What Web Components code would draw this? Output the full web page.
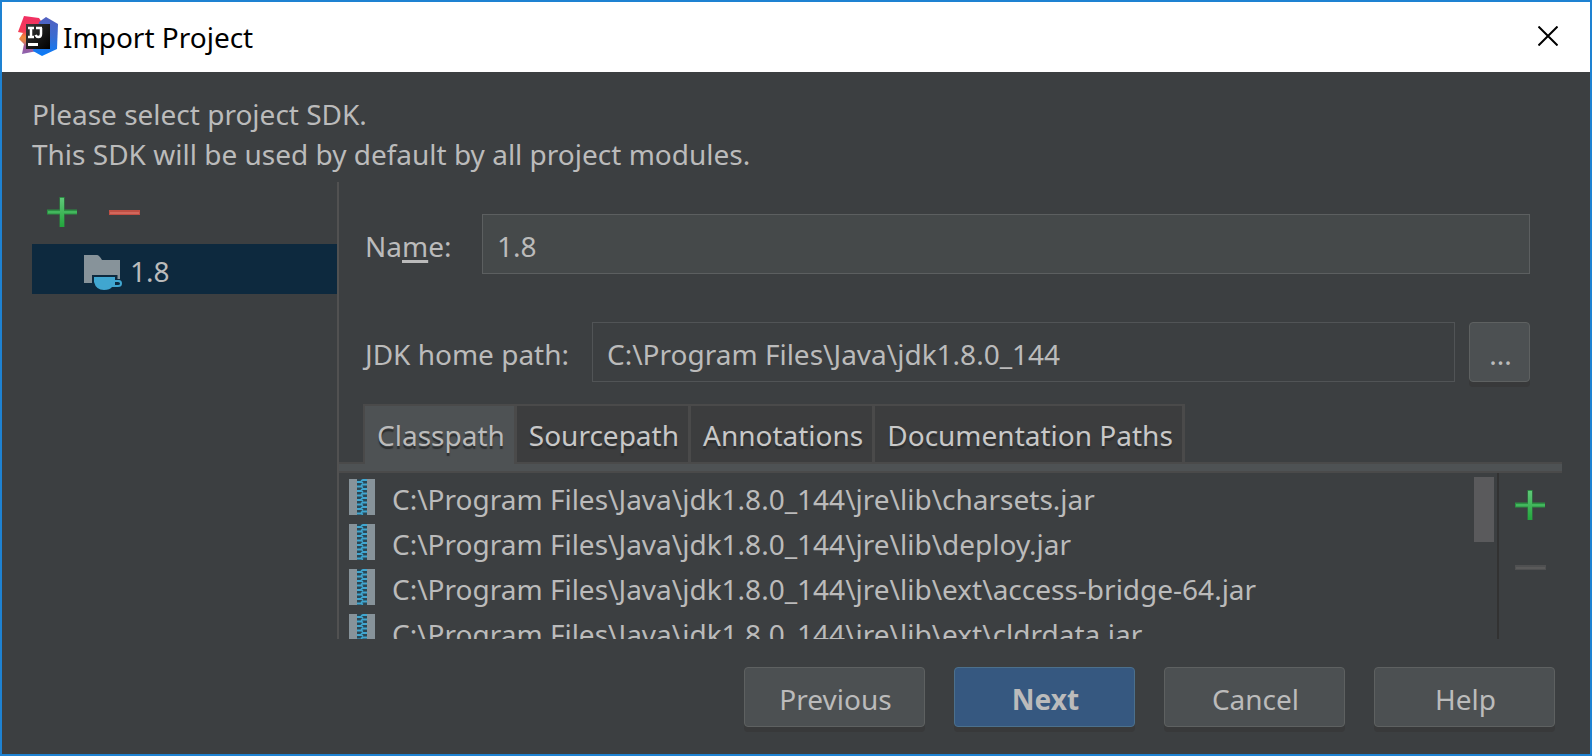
<!DOCTYPE html>
<html lang="en">
<head>
<meta charset="utf-8">
<title>Import Project</title>
<style>
  body { margin: 0; background: #3c3f41; font: 28px/40px "Noto Sans", "Open Sans", sans-serif; color: #bbbbbb; }
</style>
</head>
<body>
<import-dialog></import-dialog>

<template id="t-dialog">
  <style>
    :host { display: flex; flex-direction: column; box-sizing: border-box; height: 100vh; min-height: 640px; border: 2px solid #1e82d2; background: #3c3f41; }
    .intro { margin: 0; padding: 22px 30px 8px; }
    main { flex: 1; min-height: 0; display: flex; padding: 0 28px 0 30px; }
    sdk-sidebar { flex: 0 0 305px; }
    .detail { flex: 1; min-width: 0; display: flex; flex-direction: column; border-left: 2px solid #515151; }
    .fields { display: flex; flex-direction: column; gap: 48px; padding: 32px 32px 22px 26px; }
    path-panel { flex: 1; min-height: 0; }
    footer { display: flex; justify-content: flex-end; gap: 29px; padding: 28px 35px 27px; }
  </style>
  <title-bar>Import Project</title-bar>
  <p class="intro">Please select project SDK.<br>This SDK will be used by default by all project modules.</p>
  <main>
    <sdk-sidebar></sdk-sidebar>
    <section class="detail">
      <div class="fields">
        <form-field value="1.8" style="--label: 117px; --fill: #45494a; --line: #5c5f60">Na<u>m</u>e:</form-field>
        <form-field value="C:\Program Files\Java\jdk1.8.0_144" readonly browse style="--label: 227px">JDK home path:</form-field>
      </div>
      <path-panel></path-panel>
    </section>
  </main>
  <footer>
    <push-button>Previous</push-button>
    <push-button primary>Next</push-button>
    <push-button>Cancel</push-button>
    <push-button>Help</push-button>
  </footer>
</template>

<template id="t-title">
  <style>
    :host { display: flex; align-items: center; box-sizing: border-box; flex: 0 0 70px; height: 70px; padding: 0 32px 2px 16px; background: #fff; color: #000; }
    h1 { flex: 1; margin: 0; padding: 2px 0 0 5px; font-size: 28px; font-weight: 400; line-height: 40px; }
    button { display: flex; padding: 0; border: 0; background: none; }
    svg { display: block; }
  </style>
  <svg width="40" height="40" viewBox="0 0 40 40" aria-hidden="true">
    <defs>
      <linearGradient id="a" x1="0" y1="0" x2="0" y2="1"><stop offset="0" stop-color="#f02f63"/><stop offset=".4" stop-color="#f53b58"/><stop offset=".55" stop-color="#f0883a"/><stop offset=".66" stop-color="#e08050"/><stop offset=".8" stop-color="#a05a98"/><stop offset="1" stop-color="#8c62b0"/></linearGradient>
      <linearGradient id="b" x1="0" y1="0" x2="0" y2="1"><stop offset="0" stop-color="#5360c0"/><stop offset=".5" stop-color="#3a6cd0"/><stop offset="1" stop-color="#087cfa"/></linearGradient>
      <linearGradient id="c" x1="0" y1="0" x2="1" y2="1"><stop offset="0" stop-color="#3a3a3a"/><stop offset=".6" stop-color="#151515"/><stop offset="1" stop-color="#000"/></linearGradient>
    </defs>
    <path fill="url(#a)" d="M6 0 21 2 25 8 24 34 4 38 6 28 1 23 5 17 0 16Z"/>
    <path fill="url(#b)" d="M28 1 40 8 39 33 24 40 15 35 21 6Z"/>
    <path fill="url(#c)" d="M8 8H32V33H8Z"/>
    <path fill="none" stroke="#fff" stroke-width="2.500" d="M10 12H16M13 12V21M10 21H16M18 12H24M23 12V18Q23 21 20.500 21 18.500 21 17.500 19"/>
    <path fill="#fff" d="M10 27H20V30H10Z"/>
  </svg>
  <h1><slot></slot></h1>
  <button aria-label="Close"><svg width="20" height="20" viewBox="0 0 20 20"><path d="M.5 .5 19.500 19.500M19.500 .5 .5 19.500" stroke="#000" stroke-width="2"/></svg></button>
</template>

<template id="t-icon-button">
  <style>
    :host { display: block; }
    button { display: block; padding: 0; border: 0; background: none; }
    svg { display: block; }
  </style>
  <button><svg width="31" height="31" viewBox="0 0 31 31">
    <defs><linearGradient id="v" x1="0" y1="0" x2="0" y2="1"><stop offset="0" stop-color="#5fc878"/><stop offset="1" stop-color="#22a53c"/></linearGradient></defs>
    <g class="art"></g></svg></button>
</template>

<template id="t-sidebar">
  <style>
    :host { display: block; }
    .tools { display: flex; gap: 31px; padding: 15px 15px 16px; }
    ul { margin: 0; padding: 0; list-style: none; }
    li { display: flex; align-items: center; box-sizing: border-box; gap: 8px; height: 50px; padding: 4px 0 0 52px; background: #0d293e; }
    svg { display: block; margin-top: 4px; }
  </style>
  <div class="tools"><icon-button kind="add" label="Add SDK"></icon-button><icon-button kind="remove" label="Remove SDK"></icon-button></div>
  <ul><li>
    <svg width="38" height="36" viewBox="0 0 38 36" aria-hidden="true">
      <path fill="#87939a" d="M0 0H13Q15 0 18 5H36V24H33.500V20H8V28H0Z"/>
      <path fill="#40a6d0" d="M10 22H31V25H35Q38 25 38 28.500 38 32 34 32H28Q26 35 20 35 12 35 10 27ZM31 27V30H34Q36 30 36 28.500 36 27 34 27Z" fill-rule="evenodd"/>
    </svg>1.8</li></ul>
</template>

<template id="t-field">
  <style>
    :host { display: flex; align-items: center; }
    label { flex: 0 0 var(--label); white-space: nowrap; padding-top: 4px; }
    ::slotted(u) { text-decoration-thickness: 3px; text-underline-offset: 3px; text-decoration-skip-ink: none; }
    input { flex: 1; min-width: 0; box-sizing: border-box; height: 60px; margin: 0; padding: 4px 14px 0; border: 1px solid var(--line, #515456); background: var(--fill, #3c3f41); color: inherit; font: inherit; outline: 0; }
    push-button { margin-left: 14px; --width: 61px; }
  </style>
  <label for="box"><slot></slot></label><input id="box">
</template>

<template id="t-push">
  <style>
    :host { display: block; }
    button { display: block; box-sizing: border-box; width: var(--width, 181px); height: 60px; margin: 0; padding: 4px 0 0 2px; border: 1px solid #5e6161; border-radius: 4px; background: #4c5052; box-shadow: 0 5px 0 #38393a; color: inherit; font: inherit; }
    :host([primary]) button { background: #365880; border-color: #4c708c; font-weight: 700; }
  </style>
  <button><slot></slot></button>
</template>

<template id="t-panel">
  <style>
    :host { display: flex; flex-direction: column; }
    .tabs { flex: none; display: flex; padding-left: 24px; border-bottom: 2px solid #4a4a4a; }
    .tabs button { box-sizing: border-box; height: 58px; margin: 0; padding: 2px 9px 0 12px; border: solid #4a4a4a; border-width: 2px 3px 0 0; background: #3c3d3e; color: #c8c8c8; font: inherit; text-shadow: 0 3px 1px #2c2e2f; white-space: nowrap; }
    .tabs button[aria-selected="true"] { height: 60px; margin-bottom: -2px; padding-bottom: 2px; background: #4e5254; color: #bbbbbb; border-left: 2px solid #4a4a4a; }
    .band { flex: none; height: 7px; background: #4e5254; border-bottom: 2px solid #4a4a4a; }
    .body { flex: 1; min-height: 0; display: flex; }
    ul { flex: 1; min-width: 0; overflow: hidden; margin: 0; padding: 1px 0 0 10px; list-style: none; }
    li { display: flex; align-items: center; gap: 17px; height: 45px; white-space: nowrap; }
    li svg { flex: none; display: block; }
    li span { padding-top: 4px; }
    .thumb { width: 20px; height: 65px; margin: 4px 3px 0 0; background: #5a5a5c; }
    .tools { box-sizing: border-box; width: 65px; padding: 17px 0 0 16px; border-left: 2px solid #323232; display: flex; flex-direction: column; gap: 31px; }
  </style>
  <div class="tabs" role="tablist">
    <button role="tab" aria-selected="true">Classpath</button><button role="tab">Sourcepath</button><button role="tab">Annotations</button><button role="tab">Documentation Paths</button>
  </div>
  <div class="band"></div>
  <div class="body">
    <ul></ul>
    <div class="thumb"></div>
    <div class="tools"><icon-button kind="add" label="Add path"></icon-button><icon-button kind="disabled" label="Remove path"></icon-button></div>
  </div>
</template>

<script>
  const stamp = (host, id) => {
    const root = host.attachShadow({ mode: "open" });
    root.append(document.getElementById(id).content.cloneNode(true));
    return root;
  };
  const simple = (name, id) => customElements.define(name, class extends HTMLElement {
    constructor() { super(); stamp(this, id); }
  });

  simple("title-bar", "t-title");
  simple("push-button", "t-push");

  const minus = (fill, edge) => `<path fill="${edge}" d="M0 13H31V18H0Z"/><path fill="${fill}" d="M1 15H30V17H1Z"/>`;
  const ART = {
    add: `<path fill="#2b8f43" d="M0 12.500H30V17.500H0ZM12.500 0H17.500V30H12.500Z"/><path fill="#43b65d" d="M1 14H30V16.500H1Z"/><path fill="url(#v)" d="M13 1H17V30H13Z"/>`,
    remove: minus("#d2675c", "#c04f44"),
    disabled: minus("#5a5a5a", "#4f5051")
  };
  customElements.define("icon-button", class extends HTMLElement {
    connectedCallback() {
      if (this.shadowRoot) return;
      const root = stamp(this, "t-icon-button");
      const kind = this.getAttribute("kind");
      root.querySelector(".art").innerHTML = ART[kind];
      const button = root.querySelector("button");
      button.setAttribute("aria-label", this.getAttribute("label"));
      button.disabled = kind === "disabled";
    }
  });

  simple("sdk-sidebar", "t-sidebar");

  customElements.define("form-field", class extends HTMLElement {
    connectedCallback() {
      if (this.shadowRoot) return;
      const root = stamp(this, "t-field");
      const input = root.querySelector("input");
      input.value = this.getAttribute("value");
      input.readOnly = this.hasAttribute("readonly");
      if (this.hasAttribute("browse")) {
        const browse = document.createElement("push-button");
        browse.textContent = "...";
        root.append(browse);
      }
    }
  });

  // Zipper teeth: a right and a left tooth for each step down the strip.
  let teeth = "";
  for (let i = 0; i < 8; i++) {
    const y = i * 4.5;
    teeth += `M12 ${y + 2}L14 ${y + 1}H18M8 ${y + 3}H12L14 ${y + 4}`;
  }
  const JAR = `<svg width="26" height="36" viewBox="0 0 26 36" aria-hidden="true"><path fill="#87939a" d="M0 0H8V36H0ZM18 0H26V36H18Z"/><path fill="#2b4653" d="M8 0H18V36H8Z"/><path fill="none" stroke="#40a6d0" stroke-width="1.800" d="${teeth}"/></svg>`;
  const JARS = ["charsets.jar", "deploy.jar", "ext\\access-bridge-64.jar", "ext\\cldrdata.jar"];
  customElements.define("path-panel", class extends HTMLElement {
    constructor() {
      super();
      stamp(this, "t-panel").querySelector("ul").innerHTML =
        JARS.map(jar => `<li>${JAR}<span>C:\\Program Files\\Java\\jdk1.8.0_144\\jre\\lib\\${jar}</span></li>`).join("");
    }
  });

  simple("import-dialog", "t-dialog");
</script>
</body>
</html>
